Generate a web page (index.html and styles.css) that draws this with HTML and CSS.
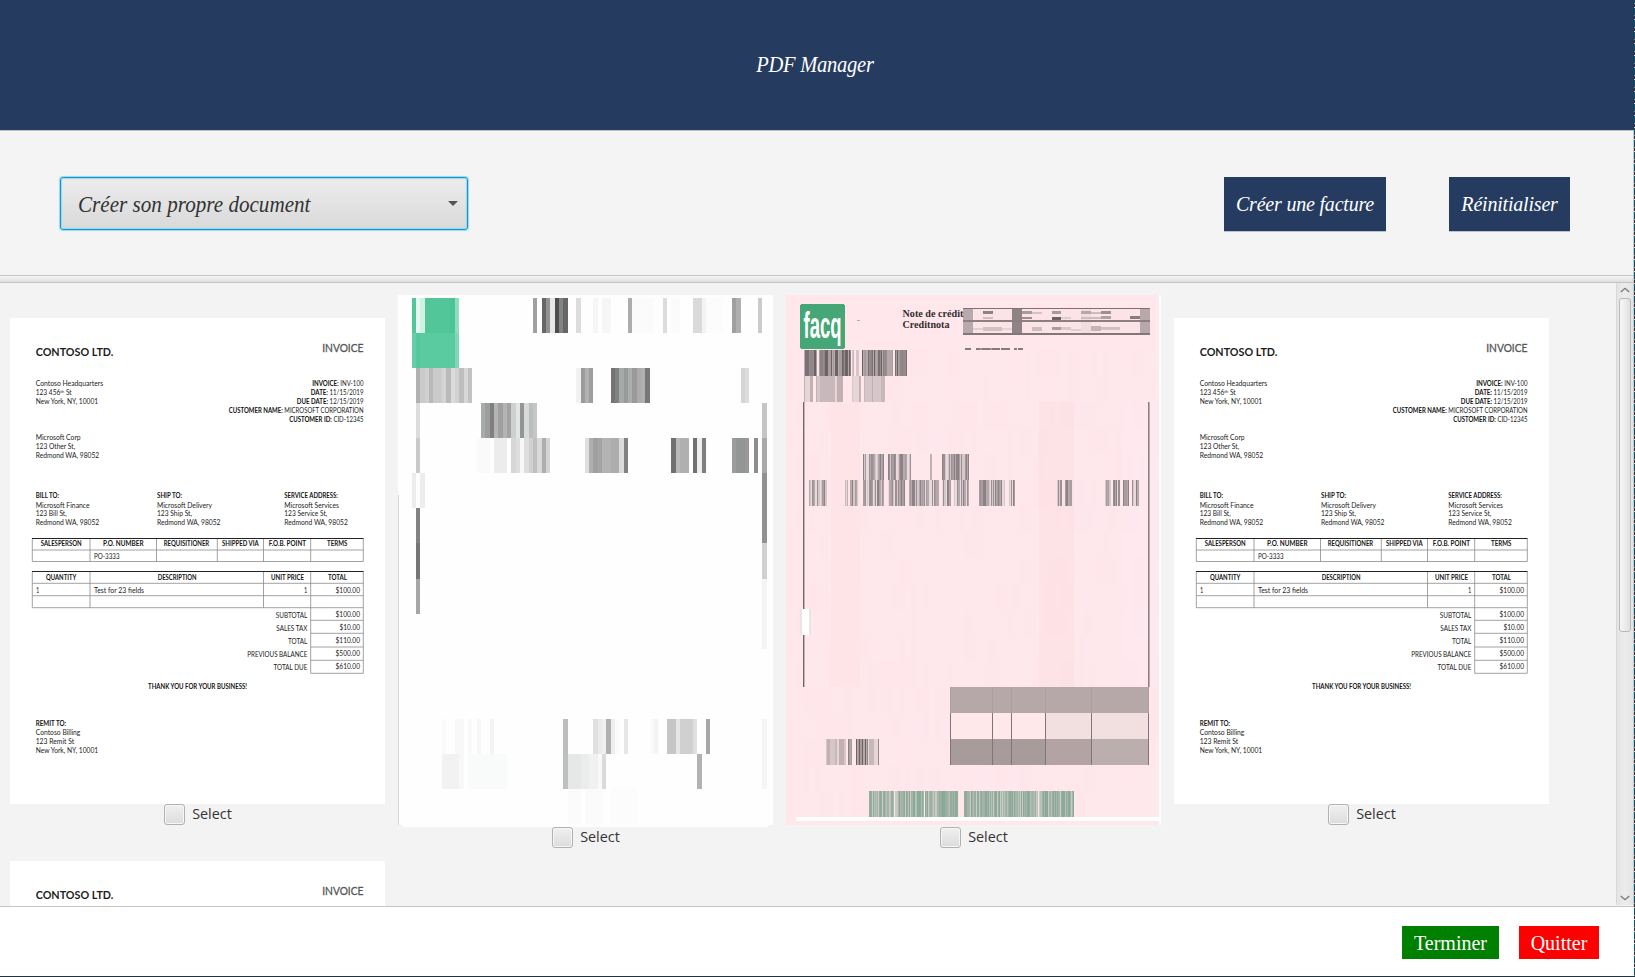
FILE: index.html
```html
<!DOCTYPE html>
<html lang="fr">
<head>
<meta charset="utf-8">
<title>PDF Manager</title>
<link rel="stylesheet" href="styles.css">
</head>
<body>
<div class="desktop">
  <div class="app">
    <header class="header"><h1 class="title">PDF Manager</h1></header>
    <section class="toolbar">
      <div class="combo"><span class="combo-text">Créer son propre document</span><span class="combo-arrow"></span></div>
      <div class="actions">
        <button class="btn btn-navy btn-create">Créer une facture</button>
        <button class="btn btn-navy btn-reset">Réinitialiser</button>
      </div>
    </section>
    <div class="divider"></div>
    <main class="viewer">
      <div class="grid">
        <div class="cell"><svg class="page invoice" viewBox="0 0 375 486"></svg><label class="pick"><span class="box"></span>Select</label></div>
        <div class="cell"><svg class="page tall" id="scan" viewBox="0 0 375 532"></svg><label class="pick"><span class="box"></span>Select</label></div>
        <div class="cell"><svg class="page tall" id="credit" viewBox="0 0 375 532"></svg><label class="pick"><span class="box"></span>Select</label></div>
        <div class="cell"><svg class="page invoice" viewBox="0 0 375 486"></svg><label class="pick"><span class="box"></span>Select</label></div>
        <div class="cell"><svg class="page invoice peek" viewBox="0 0 375 45"></svg></div>
      </div>
      <div class="scrollbar">
        <svg class="chev" viewBox="0 0 10 6"><path d="M.8 5 5 1.3 9.2 5"/></svg>
        <div class="track"><div class="thumb"></div></div>
        <svg class="chev" viewBox="0 0 10 6"><path d="M.8 1 5 4.7 9.2 1"/></svg>
      </div>
    </main>
    <footer class="footer">
      <button class="btn btn-green">Terminer</button>
      <button class="btn btn-red">Quitter</button>
    </footer>
  </div>
</div>
<script src="pages.js"></script>
</body>
</html>
```
FILE: styles.css
```css
* { box-sizing: border-box; }
body { margin: 0; overflow: hidden; font-family: "Open Sans", "Noto Sans", sans-serif; }
.desktop {
  width: 1635px; height: 977px; padding: 0 1px 1px 0;
  background: repeating-linear-gradient(180deg, #1d4656 0 3px, #6fa0a4 3px 4px, #23323f 4px 7px, #d5dadd 7px 8px, #125060 8px 12px);
}
.app { width: 1634px; height: 976px; display: flex; flex-direction: column; background: #f4f4f4; }
.header {
  height: 131px; flex: none; display: flex; align-items: center; justify-content: center;
  background: #263b60; border-bottom: 1px solid #c0c0c0;
}
.title {
  margin: 0; padding-right: 4px; color: #fff;
  font: italic 400 24px/30px "Liberation Serif", serif; letter-spacing: -.3px;
  transform: translateY(-1px) scaleX(.855);
}
.toolbar {
  height: 144px; flex: none; display: flex; align-items: center; justify-content: space-between;
  padding: 2px 63px 0 60px; border-right: 1px solid #c8c8c8;
}
.combo {
  width: 408px; height: 53px; display: flex; align-items: center; justify-content: space-between;
  margin-bottom: 1px; padding: 0 9px 0 17px; border: 1px solid #039ed3; border-radius: 3px;
  background: linear-gradient(#ededed, #d9d9d9);
  box-shadow: 0 0 1px 1px #9ed5ea, inset 0 0 1px 1px #a9d3e4;
}
.combo-text {
  color: #333; font: italic 24px/30px "Liberation Serif", serif; white-space: nowrap;
  transform: scaleX(.88); transform-origin: left;
}
.combo-arrow { border: 5px solid transparent; border-top-color: #555; border-bottom: 0; }
.actions { display: flex; gap: 63px; }
.btn { border: 0; padding: 0; color: #fff; text-align: center; white-space: nowrap; }
.btn-navy {
  height: 54px; background: #263b60; box-shadow: 0 1px #bcc2d0;
  font: italic 20px/53px "Liberation Serif", serif; letter-spacing: -.2px;
}
.btn-create { width: 162px; }
.btn-reset { width: 121px; }
.divider {
  height: 8px; flex: none; border: 1px solid #c4c4c4; border-left: 0;
  background: linear-gradient(#f6f6f6, #dedede);
}
.viewer {
  height: 624px; flex: none; display: flex; justify-content: space-between; overflow: hidden;
  border-bottom: 1px solid #c4c4c4; border-right: 1px solid #c8c8c8; background: #f3f3f3;
}
.grid {
  display: grid; grid-template-columns: repeat(4, 375px); grid-template-rows: 553px 45px; gap: 13px;
  padding: 12px 0 0 10px; align-items: center;
}
.cell { display: flex; flex-direction: column; align-items: center; }
.page { display: block; width: 375px; height: 486px; }
.invoice { background: #fff; }
.peek { height: 45px; }
.tall { height: 532px; }
.invoice text { font-family: Lato, sans-serif; }
.note { font: bold 10px "Liberation Serif", serif; fill: #352d30; }
.logo { font: bold 36px "Liberation Sans", sans-serif; fill: #fff; }
.pick {
  height: 21px; display: flex; align-items: center; gap: 7px; padding-left: 1px;
  color: #333; font-size: 14.4px; line-height: 19px; padding-bottom: 2px;
}
.box {
  width: 21px; height: 21px; margin-top: 2px; border: 1px solid #b1b1b1; border-radius: 3px;
  background: linear-gradient(#f0f0f0, #dcdcdc); box-shadow: inset 0 0 0 1px #f6f6f6;
}
.scrollbar {
  width: 17px; height: 622px; display: flex; flex-direction: column; align-items: center;
  padding: 4px 1px 4px 0; border-left: 1px solid #d8d8d8; background: linear-gradient(90deg, #e4e4e4, #ececec 50%, #e4e4e4);
}
.chev { width: 10px; height: 6px; fill: none; stroke: #777; stroke-width: 1.3; }
.track { flex: 1; width: 12px; padding-top: 5px; }
.thumb {
  height: 334px; border: 1px solid #b8b8b8; border-radius: 3px;
  background: linear-gradient(90deg, #f7f7f7, #e0e0e0);
}
.footer {
  height: 69px; flex: none; display: flex; justify-content: flex-end; gap: 20px;
  padding: 19px 35px 0 0; background: #fff;
}
.footer .btn { height: 33px; font: 20px/32px "Liberation Serif", serif; }
.footer .btn-green { width: 97px; background: #008000; }
.footer .btn-red { width: 80px; background: #f00; }
```
FILE: pages.js
```js
// Text item: x, baseline, width, content, anchor, weight, size, colour
function txt(x, y, w, s, anchor, weight, size, fill) {
  return `<text x="${x}" y="${y}" textLength="${w}" lengthAdjust="spacingAndGlyphs" text-anchor="${anchor || 'start'}" font-weight="${weight || 400}" font-size="${size || 7}" fill="${fill || '#222'}">${s}</text>`;
}
const B = s => `<tspan font-weight="700" fill="#111">${s}</tspan>`;

function heading() {
  return txt(25.7, 38, 77.7, 'CONTOSO LTD.', 'start', 700, 11.8, '#1c1c1c')
    + `<g stroke="#555" stroke-width=".3">${txt(353.5, 34, 41.3, 'INVOICE', 'end', 400, 11.8, '#555')}</g>`;
}
function invoice() {
  let o = heading();
  [[25.7, 68.3, 67.5, 'Contoso Headquarters'],
   [25.7, 77.3, 36, '123 456<tspan font-size="4.5" dy="-2">th</tspan><tspan dy="2"> St</tspan>'],
   [25.7, 86.2, 62.5, 'New York, NY, 10001'],
   [25.7, 122, 45, 'Microsoft Corp'], [25.7, 131, 39.5, '123 Other St,'], [25.7, 140, 63.5, 'Redmond WA, 98052'],
   [25.7, 189.7, 54, 'Microsoft Finance'], [25.7, 198.3, 31, '123 Bill St,'], [25.7, 207.3, 63.5, 'Redmond WA, 98052'],
   [147, 189.7, 55, 'Microsoft Delivery'], [147, 198.3, 35, '123 Ship St,'], [147, 207.3, 63.5, 'Redmond WA, 98052'],
   [274.3, 189.7, 54.7, 'Microsoft Services'], [274.3, 198.3, 43, '123 Service St,'], [274.3, 207.3, 63.5, 'Redmond WA, 98052'],
   [84, 240.7, 25.5, 'PO-3333'], [26, 274.7, 3.3, '1'], [84, 274.7, 50, 'Test for 23 fields'],
   [25.7, 417, 44.7, 'Contoso Billing'], [25.7, 426, 38.5, '123 Remit St'], [25.7, 435, 62.5, 'New York, NY, 10001']
  ].forEach(t => o += txt(...t));
  [[353.5, 67.5, 51.3, B('INVOICE:') + ' INV-100'], [353.5, 76.6, 52.7, B('DATE:') + ' 11/15/2019'],
   [353.5, 85.5, 66.7, B('DUE DATE:') + ' 12/15/2019'],
   [353.5, 94.5, 134.7, B('CUSTOMER NAME:') + ' MICROSOFT CORPORATION'],
   [353.5, 103.5, 74.3, B('CUSTOMER ID:') + ' CID-12345'],
   [297.3, 274.7, 3.3, '1'], [350, 274.7, 24.5, '$100.00'],
   [350, 298.7, 24.5, '$100.00'], [350, 311.7, 20.5, '$10.00'], [350, 325, 24.5, '$110.00'],
   [350, 338, 24.5, '$500.00'], [350, 351, 24.5, '$610.00'],
   [297.3, 299.5, 31.5, 'SUBTOTAL'], [297.3, 312.5, 31, 'SALES TAX'], [297.3, 326, 19.3, 'TOTAL'],
   [297.3, 339, 60, 'PREVIOUS BALANCE'], [297.3, 352, 33.7, 'TOTAL DUE']
  ].forEach(t => o += txt(...t, 'end', 400, 6.7));
  [[25.7, 180, 23.5, 'BILL TO:'], [147, 180, 25, 'SHIP TO:'], [274.3, 180, 53.5, 'SERVICE ADDRESS:'],
   [30.7, 228, 41, 'SALESPERSON'], [93, 228, 40.5, 'P.O. NUMBER'], [153.7, 228, 45.5, 'REQUISITIONER'],
   [212, 228, 36.7, 'SHIPPED VIA'], [258.7, 228, 37.3, 'F.O.B. POINT'], [317, 228, 20.3, 'TERMS'],
   [36, 262, 30.3, 'QUANTITY'], [147.7, 262, 39, 'DESCRIPTION'], [261, 262, 33, 'UNIT PRICE'], [318, 262, 19, 'TOTAL'],
   [138, 371.4, 99, 'THANK YOU FOR YOUR BUSINESS!'], [25.7, 407.7, 30.5, 'REMIT TO:']
  ].forEach(t => o += txt(...t, 'start', 700, 6.6, '#151515'));
  o += '<path fill="none" stroke="#8a8a8a" stroke-width=".8" d="M22.3 232H353.3M22.3 243.5H353.3M22.3 220.5V243.5M80 220.5V243.5M146.5 220.5V243.5M207.3 220.5V243.5M253.5 220.5V243.5M300.7 220.5V243.5M353.3 220.5V243.5M22.3 265.3H353.3M22.3 277.7H353.3M22.3 289.7H353.3M22.3 253.5V289.7M80 253.5V289.7M253.5 253.5V289.7M300.7 253.5V355.3M353.3 253.5V355.3M300.7 302.3H353.3M300.7 315.3H353.3M300.7 329H353.3M300.7 342.3H353.3M300.7 355.3H353.3"/>'
    + '<path stroke="#222" d="M22 220.5H353.5M22 253.5H353.5"/>';
  return o;
}
document.querySelectorAll('.invoice').forEach(e => e.innerHTML = e.classList.contains('peek') ? heading() : invoice());

const rect = (x, y, w, h, c) => `<rect x="${x}" y="${y}" width="${w}" height="${h}" fill="${c}"/>`;
// Row of touching stripes: each token is "edge:colour", running up to the next edge; "-" leaves a hole
function row(y, h, spec) {
  const t = spec.split(' ').map(s => s.split(':'));
  let o = '';
  for (let i = 0; i < t.length - 1; i++)
    if (t[i][1] !== '-') o += rect(t[i][0], y, t[i + 1][0] - t[i][0], h, '#' + t[i][1]);
  return o;
}

// Scanned document, measured in thirds of a pixel
const scan = rect(24, 30, 1125, 1590, '#fefefe') + rect(39, 1600, 1095, 26, '#fefefe')
  + row(39, 105, '66:52c699 78:e6f7f1 90:cef2e5 105:52c699 180:4cc596 195:8fdcc0 207:- 429:a0a0a0 441:- 456:666 468:929292 480:e6e6e6 495:4d4d4d 507:808482 519:666 534:- 558:dcdcdc 573:- 609:f6f6f6 624:fefefe 636:f6f6f6 663:- 714:adadad 726:fbfbfb 792:- 819:dcdcdc 831:- 843:fbfbfb 870:- 909:dadada 936:f3f3f3 948:fcfcfc 1000:- 1026:9f9f9f 1038:afafaf 1053:- 1104:cbcbcb 1116:-')
  + row(144, 105, '66:6acbaa 78:52c99c 90:5acba0 195:7fd7b8 207:-')
  + row(249, 105, '78:b0b0b0 90:cacaca 105:d0d0d0 117:b9b9b9 129:cbcbcb 156:d4d4d4 168:bababa 183:dcdcdc 195:d2d2d2 207:bebebe 222:d7d7d7 234:c3c3c3 246:- 558:f1f1f1 573:999c9a 585:b1b1b1 597:9e9e9e 609:- 663:747474 675:808281 687:a5aaa8 702:979b99 714:abaeac 726:989b9a 741:acacac 753:b0b0b0 765:787878 780:- 1053:d5d5d5 1065:dcdcdc 1077:-')
  + row(354, 105, '78:dcdcdc 90:- 273:a9acaa 285:9a9e9c 300:808080 312:b5b5b5 324:a0a0a0 339:b4b4b4 351:a3a3a3 363:ccd0ce 378:e3e4e5 390:929695 402:d8dbda 417:bbbfbd 429:c6c6c6 441:- 1116:c5c5c5 1131:-')
  + row(459, 105, '78:cacaca 90:- 261:fafafa 300:- 312:ececec 351:- 363:d7d7d7 378:dedede 390:f8f8f8 402:dedede 417:d0d0d0 429:bfbfbf 441:dadada 456:aeaeae 468:d4d4d4 480:- 585:dedede 597:b0b0b0 609:a0a0a0 624:a4a4a4 636:b3b3b3 663:adadad 687:dadcdb 702:828282 714:- 843:707070 858:b9b9b9 870:b0b0b0 897:- 909:707070 921:eee 936:7e7e7e 948:- 1026:9c9c9c 1038:929694 1065:999 1077:- 1092:8e8e8e 1104:- 1116:a9a9a9 1131:-')
  + row(564, 105, '66:ecedec 78:- 90:ecedec 105:- 1116:919191 1131:-')
  + row(669, 105, '78:828282 90:- 1116:919191 1131:-')
  + row(774, 108, '78:757575 90:- 1116:d0d0d0 1131:-')
  + row(882, 105, '78:a6a6a6 90:- 1116:f4f4f4 1131:-')
  + row(987, 105, '1116:f4f4f4 1131:-')
  + row(1302, 105, '156:fafafa 168:- 195:f8f8f8 222:- 234:f9f9f9 246:- 261:f7f7f7 273:- 300:f3f3f3 312:- 519:bdbdbd 534:- 609:e0e0e0 624:ebebeb 636:f0f0f0 648:b0b0b0 663:eee 675:fafafa 687:- 702:e6e6e6 714:- 780:fafafa 792:f3f3f3 804:- 831:c4c7c5 858:e6e6e6 870:d0d0d0 909:e0e0e0 921:- 948:a7a7a7 960:- 1116:f5f5f5 1131:-')
  + row(1407, 105, '156:f2f2f2 207:f8f8f8 222:- 234:f9fbfa 351:- 519:bcc0be 534:e6e8e7 573:ebedec 597:f1f1f4 624:f8faf9 636:dadada 648:- 921:b2b2b2 936:- 1116:f5f5f5 1131:-')
  + row(1512, 105, '534:fbfbfb 573:- 585:fbfbfb 636:- 663:fcfcfc 740:-')
  + row(630, 990, '24:d3d8d6 28:-');
document.getElementById('scan').innerHTML = `<g shape-rendering="crispEdges" transform="translate(-8 -10) scale(.33333)">${scan}</g>`;

// Dense stripe cluster with a repeatable shade sequence
function cluster(x0, x1, y, colours, seed) {
  let o = '', s = seed;
  for (let x = x0; x < x1; x += 3) {
    s = (s * 1103515245 + 12345) % 2147483648;
    o += rect(x, y, 3, 78, colours[(s >> 8) % colours.length]);
  }
  return o;
}
const dark = ['#6d6365', '#958a8d', '#a89c9f', '#8d8385', '#b5a9ab', '#7b7073'];
const mid = ['#9b9093', '#b5a9ad', '#d5c7ca', '#8d8386', '#eadadd', '#a99da0'];
const soft = ['#c8b8bb', '#d7c6c9', '#c1b0b4', '#e8d5d8'];
const green = ['#8fa99a', '#a4b7ab', '#b5c2b8', '#9aada1', '#a9b0aa', '#88aa97', '#c9cbc4'];
const pink = ['#ffe7eb', '#ffe6ea', '#ffe8eb', '#fee6ea', '#ffe8ec', '#fee7ed'];
let c = rect(18, 30, 1113, 1590, '#ffe7eb') + rect(1131, 30, 6, 1590, '#f4edef') + rect(1137, 30, 6, 1590, '#fdfbfc');
for (let y = 195, n = 3; y < 1590; y += 78, n += 7)
  for (let x = 51, s = n; x < 1131; x += 18) {
    s = (s * 1103515245 + 12345) % 2147483648;
    c += rect(x, y, 18, 78, pink[(s >> 8) % 6]);
  }
c += '<g opacity=".6">' + rect(153, 351, 87, 855, '#fee1e4') + rect(777, 351, 105, 855, '#fddfe3') + rect(882, 351, 45, 855, '#ffe9ee') + rect(1026, 351, 105, 855, '#ffeaf1') + '</g>';
c += '<rect x="60" y="57" width="135" height="135" rx="7" fill="#45a775"/>'
  + rect(231, 105, 9, 4, '#b9a8ac');
// Reference table in the top corner
c += rect(549, 68, 561, 80, '#fce3e7') + rect(549, 68, 30, 80, '#b8a9ac') + rect(696, 68, 30, 80, '#8f8385') + rect(1080, 68, 30, 80, '#b6a8ab') + rect(903, 68, 30, 80, '#f2dcdf');
[[609, 78, 30, 9, '#8e8285'], [609, 96, 30, 7, '#cdbec1'], [726, 78, 30, 9, '#a79b9d'], [756, 80, 30, 7, '#d2c3c6'], [726, 96, 30, 7, '#9a8e91'], [816, 78, 27, 9, '#a69a9c'], [816, 96, 27, 8, '#6c6265'], [843, 96, 30, 7, '#dccdd0'], [903, 78, 30, 9, '#b5a8aa'], [933, 80, 30, 7, '#cbbcbf'], [963, 78, 30, 9, '#9b8f91'], [903, 96, 60, 7, '#cbbcbe'], [963, 94, 30, 9, '#aea1a4'], [1050, 94, 30, 9, '#887c7f'], [580, 129, 29, 6, '#dfd0d3'], [609, 126, 57, 11, '#cfc0c3'], [666, 130, 30, 6, '#e2d3d6'], [756, 126, 30, 11, '#cdbec1'], [816, 126, 27, 10, '#a99c9f'], [843, 126, 30, 8, '#d7c8cb'], [873, 131, 30, 6, '#ddced1'], [933, 123, 30, 14, '#c2b4b7'], [963, 127, 57, 9, '#cebfc2'],
 [549, 68, 561, 4, '#7d7174'], [549, 106, 561, 5, '#8c7f82'], [549, 144, 561, 5, '#82767a']].forEach(r => c += rect(...r));
c += row(190, 4, '555:857b7e 573:- 588:857b7e 600:a59a9d 606:857b7e 630:a59a9d 636:857b7e 660:- 664:857b7e 690:- 702:857b7e 712:- 715:857b7e 730:-');
[[72, 111, 195, dark], [117, 213, 195, dark], [216, 222, 195, soft], [228, 237, 195, mid], [246, 339, 195, dark], [345, 381, 195, dark],
 [72, 99, 273, soft], [108, 189, 273, soft], [216, 243, 273, soft], [252, 315, 273, soft],
 [249, 312, 507, mid], [324, 393, 507, mid], [450, 456, 507, soft], [486, 567, 507, mid],
 [87, 141, 585, mid], [195, 204, 585, soft], [210, 234, 585, mid], [249, 312, 585, mid], [324, 375, 585, mid], [387, 477, 585, mid], [486, 513, 585, mid], [522, 567, 585, mid], [597, 675, 585, mid], [687, 705, 585, mid], [831, 846, 585, mid], [855, 876, 585, mid], [975, 993, 585, mid], [999, 1020, 585, mid], [1029, 1047, 585, mid], [1056, 1077, 585, mid],
 [138, 198, 1362, soft], [204, 216, 1362, dark], [228, 264, 1362, dark], [264, 294, 1362, soft], [294, 297, 1362, dark],
 [267, 342, 1518, green], [345, 432, 1518, green], [435, 534, 1518, green], [552, 774, 1518, green], [777, 882, 1518, green]
].forEach((k, i) => c += cluster(k[0], k[1], k[2], k[3], i * 97 + 11));
c += rect(69, 351, 3, 855, '#6e6668') + rect(72, 351, 3, 855, '#c5b5b8') + rect(1104, 351, 3, 855, '#8b8083') + rect(1107, 351, 3, 855, '#b9abae')
  + rect(60, 972, 33, 78, '#eae4e4') + rect(66, 972, 21, 78, '#fff');
// Totals block
c += rect(510, 1206, 597, 78, '#b6a8a9') + rect(510, 1284, 600, 78, '#ffe8ea') + rect(798, 1284, 309, 78, '#f2dfe0') + rect(510, 1362, 597, 78, '#a89b9b') + rect(798, 1362, 135, 78, '#b4a3a5') + rect(933, 1362, 174, 78, '#bcadae');
[510, 636, 693, 795, 933, 1104].forEach(x => c += rect(x, 1206, 3, 78, '#ab9fa1') + rect(x, 1284, 4, 156, '#807678'));
c += rect(48, 1596, 1092, 12, '#fff');
document.getElementById('credit').innerHTML = `<g shape-rendering="crispEdges" transform="translate(-6 -10) scale(.33333)">${c}</g>`
  + '<text class="logo" x="17.5" y="43" textLength="38" lengthAdjust="spacingAndGlyphs">facq</text>'
  + '<text class="note" x="116.5" y="22" textLength="61" lengthAdjust="spacingAndGlyphs">Note de crédit</text>'
  + '<text class="note" x="116.5" y="33" textLength="47" lengthAdjust="spacingAndGlyphs">Creditnota</text>';
```
